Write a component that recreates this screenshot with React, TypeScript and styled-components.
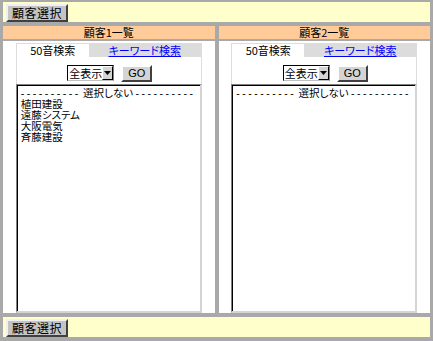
import React from "react";
import styled, { createGlobalStyle } from "styled-components";

const GlobalStyle = createGlobalStyle`
  html, body {
    margin: 0;
    padding: 0;
    background: #ffffff;
  }
  body {
    font-family: "Noto Sans CJK JP", "Liberation Sans", sans-serif;
    font-size: 12px;
    color: #000000;
  }
`;

const Frame = styled.div`
  width: 433px;
  height: 341px;
  box-sizing: border-box;
  background: #a9a9a9;
  padding: 2px 3px 4px 3px;
  display: flex;
  flex-direction: column;
`;

const ActionBar = styled.div<{ $bottom?: boolean }>`
  height: 20px;
  flex: none;
  background: #ffffcc;
  display: flex;
  align-items: flex-end;
  padding-left: 3px;
  margin-top: ${(p) => (p.$bottom ? "4px" : "0")};
`;

const BarButton = styled.button`
  width: 62px;
  height: 18px;
  box-sizing: border-box;
  margin: 0;
  padding: 0;
  font-family: inherit;
  font-size: 12px;
  line-height: 14px;
  letter-spacing: 0.5px;
  color: #000;
  background: #c4c4c4;
  border: 2px solid;
  border-color: #f0f0f0 #404040 #404040 #f0f0f0;
`;

const Columns = styled.div`
  flex: 1;
  margin-top: 4px;
  display: grid;
  grid-template-columns: 1fr 1fr;
  grid-template-rows: 13px 1fr;
  column-gap: 4px;
  row-gap: 2px;
  min-height: 0;
`;

const ColumnHead = styled.div`
  background: #ffcc99;
  font-size: 11px;
  line-height: 13px;
  text-align: center;
  font-feature-settings: "palt";
`;

const ColumnBody = styled.div`
  background: #ffffff;
  display: flex;
  flex-direction: column;
  align-items: center;
  padding-top: 2px;
  min-height: 0;
`;

const SearchPanel = styled.div`
  width: 186px;
  box-sizing: border-box;
  border: 1px solid #dcdcdc;
  border-bottom: none;
`;

const TabRow = styled.div`
  display: grid;
  grid-template-columns: 72px 1fr;
  height: 13px;
`;

const Tab = styled.div<{ $active?: boolean }>`
  background: ${(p) => (p.$active ? "#ffffff" : "#dcdcdc")};
  font-size: 11px;
  line-height: 13px;
  text-align: center;
  font-feature-settings: "palt";
`;

const TabLink = styled.a`
  color: #0000ff;
  text-decoration: underline;
`;

const FilterRow = styled.div`
  height: 27px;
  box-sizing: border-box;
  padding-top: 8px;
  display: flex;
  justify-content: center;
  align-items: flex-start;
  gap: 7px;
`;

const FakeSelect = styled.div`
  width: 47px;
  height: 16px;
  box-sizing: border-box;
  border: 1px solid;
  border-color: #000 #808080 #c0c0c0 #000;
  background: #fff;
  display: flex;
  align-items: stretch;
  margin-left: 2px;
`;

const SelectText = styled.span`
  flex: 1;
  font-size: 11px;
  line-height: 14px;
  padding-left: 1px;
  white-space: nowrap;
  overflow: hidden;
`;

const SelectArrow = styled.span`
  width: 11px;
  flex: none;
  box-sizing: border-box;
  background: #d4d4d4;
  border: 1px solid;
  border-color: #ffffff #000 #000 #ffffff;
  display: flex;
  align-items: center;
  justify-content: center;
`;

const GoButton = styled.button`
  width: 31px;
  height: 17px;
  box-sizing: border-box;
  margin: 0;
  padding: 0;
  font-family: "Liberation Sans", sans-serif;
  font-size: 11px;
  line-height: 13px;
  color: #000;
  background: #d4d4d4;
  border: 2px solid;
  border-color: #ffffff #404040 #404040 #ffffff;
`;

const ListBox = styled.div`
  width: 186px;
  height: 229px;
  box-sizing: border-box;
  background: #fff;
  border-style: solid;
  border-width: 1px 2px 2px 1px;
  border-color: #808080 #d4d4d4 #d4d4d4 #808080;
  box-shadow: inset 1px 1px 0 #000;
  padding: 2px 0 0 4px;
  overflow: hidden;
`;

const ListOption = styled.div`
  font-size: 10.5px;
  line-height: 11px;
  height: 11px;
  white-space: nowrap;
  font-feature-settings: "palt";
`;

const Dashes = styled.span`
  font-family: "Liberation Sans", sans-serif;
  font-size: 10.5px;
  letter-spacing: 2.5px;
`;

const Arrow = () => (
  <svg width="7" height="4" viewBox="0 0 7 4" aria-hidden="true">
    <path d="M0 0h7L3.5 4z" fill="#000" />
  </svg>
);

type Customer = { id: number; title: string; items: string[] };

const customers: Customer[] = [
  { id: 1, title: "顧客1一覧", items: ["植田建設", "遠藤システム", "大阪電気", "斉藤建設"] },
  { id: 2, title: "顧客2一覧", items: [] },
];

const CustomerColumnBody = ({ items }: { items: string[] }) => (
  <ColumnBody>
    <SearchPanel>
      <TabRow>
        <Tab $active>50音検索</Tab>
        <Tab>
          <TabLink href="#">キーワード検索</TabLink>
        </Tab>
      </TabRow>
      <FilterRow>
        <FakeSelect>
          <SelectText>全表示</SelectText>
          <SelectArrow>
            <Arrow />
          </SelectArrow>
        </FakeSelect>
        <GoButton type="button">GO</GoButton>
      </FilterRow>
    </SearchPanel>
    <ListBox>
      <ListOption>
        <Dashes>----------</Dashes> 選択しない <Dashes>----------</Dashes>
      </ListOption>
      {items.map((name) => (
        <ListOption key={name}>{name}</ListOption>
      ))}
    </ListBox>
  </ColumnBody>
);

const App = () => {
  return (
    <>
      <GlobalStyle />
      <Frame>
        <ActionBar>
          <BarButton type="button">顧客選択</BarButton>
        </ActionBar>
        <Columns>
          {customers.map((c) => (
            <ColumnHead key={`h${c.id}`}>{c.title}</ColumnHead>
          ))}
          {customers.map((c) => (
            <CustomerColumnBody key={`b${c.id}`} items={c.items} />
          ))}
        </Columns>
        <ActionBar $bottom>
          <BarButton type="button">顧客選択</BarButton>
        </ActionBar>
      </Frame>
    </>
  );
};

export default App;
